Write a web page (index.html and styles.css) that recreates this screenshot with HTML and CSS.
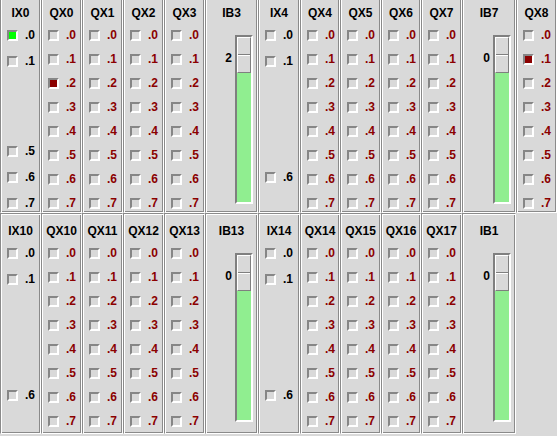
FILE: index.html
```html
<!DOCTYPE html>
<html lang="en">
<head>
    <meta charset="UTF-8">
    <meta name="viewport" content="width=device-width, initial-scale=1.0">
    <title>IO monitor</title>
    <link rel="stylesheet" href="styles.css">
</head>
<body>
    <div class="board" id="board"></div>

    <script>
    // one entry per frame, row by row
    var frames = [
        {name: "IX0", kind: "in", bits: [0, 1, 5, 6, 7], on: 0},
        {name: "QX0", kind: "out", on: 2},
        {name: "QX1", kind: "out"},
        {name: "QX2", kind: "out"},
        {name: "QX3", kind: "out"},
        {name: "IB3", kind: "byte", value: 2},
        {name: "IX4", kind: "in", bits: [0, 1, 6]},
        {name: "QX4", kind: "out"},
        {name: "QX5", kind: "out"},
        {name: "QX6", kind: "out"},
        {name: "QX7", kind: "out"},
        {name: "IB7", kind: "byte", value: 0},
        {name: "QX8", kind: "out", on: 1},

        {name: "IX10", kind: "in", bits: [0, 1, 6]},
        {name: "QX10", kind: "out"},
        {name: "QX11", kind: "out"},
        {name: "QX12", kind: "out"},
        {name: "QX13", kind: "out"},
        {name: "IB13", kind: "byte", value: 0},
        {name: "IX14", kind: "in", bits: [0, 1, 6]},
        {name: "QX14", kind: "out"},
        {name: "QX15", kind: "out"},
        {name: "QX16", kind: "out"},
        {name: "QX17", kind: "out"},
        {name: "IB1", kind: "byte", value: 0},
        {name: "", kind: "none"}
    ];

    function bitRow(n, frame, ghost) {
        var cls = "box";
        if (frame.on === n) cls += frame.kind == "in" ? " on-in" : " on-out";
        return '<div class="bit' + (ghost ? ' ghost' : '') + '">' +
               '<span class="' + cls + '"></span>' +
               '<span class="lbl">.' + n + '</span></div>';
    }

    function renderFrame(f) {
        if (f.kind == "none") return '<div class="blank"></div>';

        var body = "";
        if (f.kind == "out") {
            body += '<div class="bits">';
            for (var i = 0; i < 8; i++) body += bitRow(i, f, false);
            body += '</div>';
        }
        else if (f.kind == "in") {
            body += '<div class="bits">';
            body += bitRow(0, f, false) + bitRow(1, f, false);
            body += '<div class="lower">';
            [5, 6, 7].forEach(function (n) {
                body += bitRow(n, f, f.bits.indexOf(n) < 0);
            });
            body += '</div></div>';
        }
        else {
            body += '<div class="scale">' +
                    '<span class="value">' + f.value + '</span>' +
                    '<div class="trough"><div class="thumb"></div></div>' +
                    '</div>';
        }

        return '<div class="panel ' + f.kind + '">' +
               '<div class="title">' + f.name + '</div>' + body + '</div>';
    }

    var html = "";
    frames.forEach(function (f) { html += renderFrame(f); });
    document.getElementById("board").innerHTML = html;
    </script>
</body>
</html>
```

FILE: styles.css
```css
body {
    margin: 0;
    background-color: #d9d9d9;
    font-family: "Liberation Sans", Arial, sans-serif;
    font-size: 12px;
    font-weight: bold;
    overflow: hidden;
}

.board {
    display: grid;
    grid-template-columns: 41px 41px 41px 41px 41px 53px 42px 40px 41px 40px 41px 54px 41px;
    grid-template-rows: 218px 221px;
    margin-top: -5px;
}

/* tk style groove frame */
.panel {
    box-sizing: border-box;
    border: 1px solid;
    border-color: #8a8a8a #fff #fff #8a8a8a;
    box-shadow: inset 1px 1px #fff, inset -1px -1px #8a8a8a;
    padding: 9px 0 0 6px;
}

.title {
    height: 16px;
    line-height: 16px;
    margin-left: -6px;
    text-align: center;
    color: #000;
}

.bits {
    margin-top: 2px;
    height: 192px;
    display: flex;
    flex-direction: column;
}

.in .bits,
.in .lower {
    gap: 2px;
}

.lower {
    margin-top: auto;
    display: flex;
    flex-direction: column;
}

.bit {
    flex: none;
    height: 24px;
    display: flex;
    align-items: center;
}

.ghost {
    visibility: hidden;
}

.box {
    width: 11px;
    height: 11px;
    box-sizing: border-box;
    border: 2px solid;
    border-color: #868686 #fff #fff #868686;
    background-color: #d9d9d9;
}

.box.on-in {
    background-color: #00ff00;
}

.box.on-out {
    background-color: #8b0000;
}

.lbl {
    margin-left: 7px;
    line-height: 14px;
    color: #8b0000;
}

.in .lbl {
    color: #000;
}

/* byte slider */
.scale {
    margin-top: 14px;
    padding-right: 4px;
    display: flex;
    justify-content: flex-end;
    align-items: flex-start;
    gap: 3px;
}

.value {
    margin-top: 16px;
    line-height: 14px;
    color: #000;
}

.trough {
    width: 18px;
    height: 169px;
    box-sizing: border-box;
    border: 2px solid;
    border-color: #7f7f7f #fff #fff #7f7f7f;
    background-color: #90ee90;
}

.thumb {
    height: 36px;
    box-sizing: border-box;
    border: 1px solid;
    border-color: #fff #7f7f7f #7f7f7f #fff;
    background: linear-gradient(#d9d9d9 16px, #7f7f7f 16px, #7f7f7f 17px, #fff 17px, #fff 18px, #d9d9d9 18px);
}
```
